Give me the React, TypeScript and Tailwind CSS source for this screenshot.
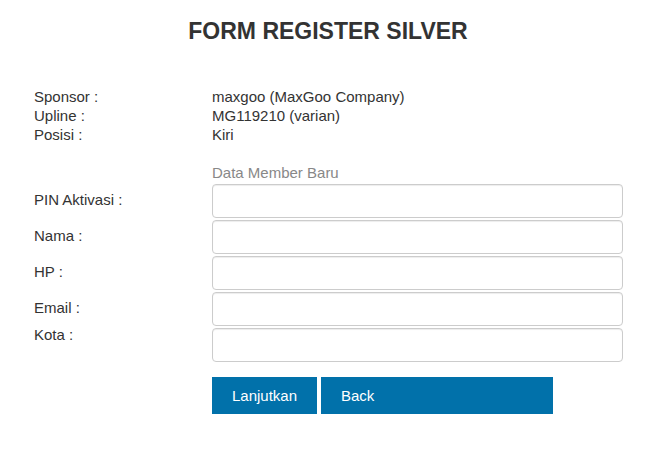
import React from 'react';

const App: React.FC = () => {
  const info = [
    { label: 'Sponsor :', value: 'maxgoo (MaxGoo Company)' },
    { label: 'Upline :', value: 'MG119210 (varian)' },
    { label: 'Posisi :', value: 'Kiri' },
  ];

  const fields = ['PIN Aktivasi :', 'Nama :', 'HP :', 'Email :'];

  return (
    <div className="min-h-[450px] w-[656px] bg-white text-[#333] text-[15px] font-['Liberation_Sans',Arial,sans-serif]">
      {/* Title */}
      <h1 className="pt-[18px] text-center text-[23px] font-bold leading-[26px] text-[#333]">
        FORM REGISTER SILVER
      </h1>

      <div className="pl-[34px] pt-[43px]">
        {/* Sponsor info */}
        {info.map((row) => (
          <div key={row.label} className="grid grid-cols-[178px_1fr] leading-[19px]">
            <span>{row.label}</span>
            <span>{row.value}</span>
          </div>
        ))}

        <div className="mt-[19px] grid grid-cols-[178px_1fr] leading-[19px]">
          <span />
          <span className="text-[#888]">Data Member Baru</span>
        </div>

        {/* Form fields */}
        <div className="mt-[2px]">
          {fields.map((label) => (
            <div key={label} className="mb-[2px] grid grid-cols-[178px_411px] items-center">
              <label className="leading-[18px] -mt-[2px]">{label}</label>
              <input
                type="text"
                className="h-[34px] rounded-[4px] border border-[#ccc] bg-white px-3 shadow-[inset_0_1px_1px_rgba(0,0,0,0.075)] outline-none"
              />
            </div>
          ))}
          <div className="grid grid-cols-[178px_411px] items-start">
            <label className="leading-[18px] -mt-[2px]">Kota :</label>
            <input
              type="text"
              className="h-[34px] rounded-[4px] border border-[#ccc] bg-white px-3 shadow-[inset_0_1px_1px_rgba(0,0,0,0.075)] outline-none"
            />
          </div>
        </div>

        {/* Buttons */}
        <div className="mt-[15px] flex gap-[4px] pl-[178px]">
          <button className="h-[37px] w-[105px] bg-[#0171aa] text-white leading-[37px]">
            Lanjutkan
          </button>
          <button className="h-[37px] w-[232px] bg-[#0171aa] pl-[20px] text-left text-white leading-[37px]">
            Back
          </button>
        </div>
      </div>
    </div>
  );
};

export default App;
